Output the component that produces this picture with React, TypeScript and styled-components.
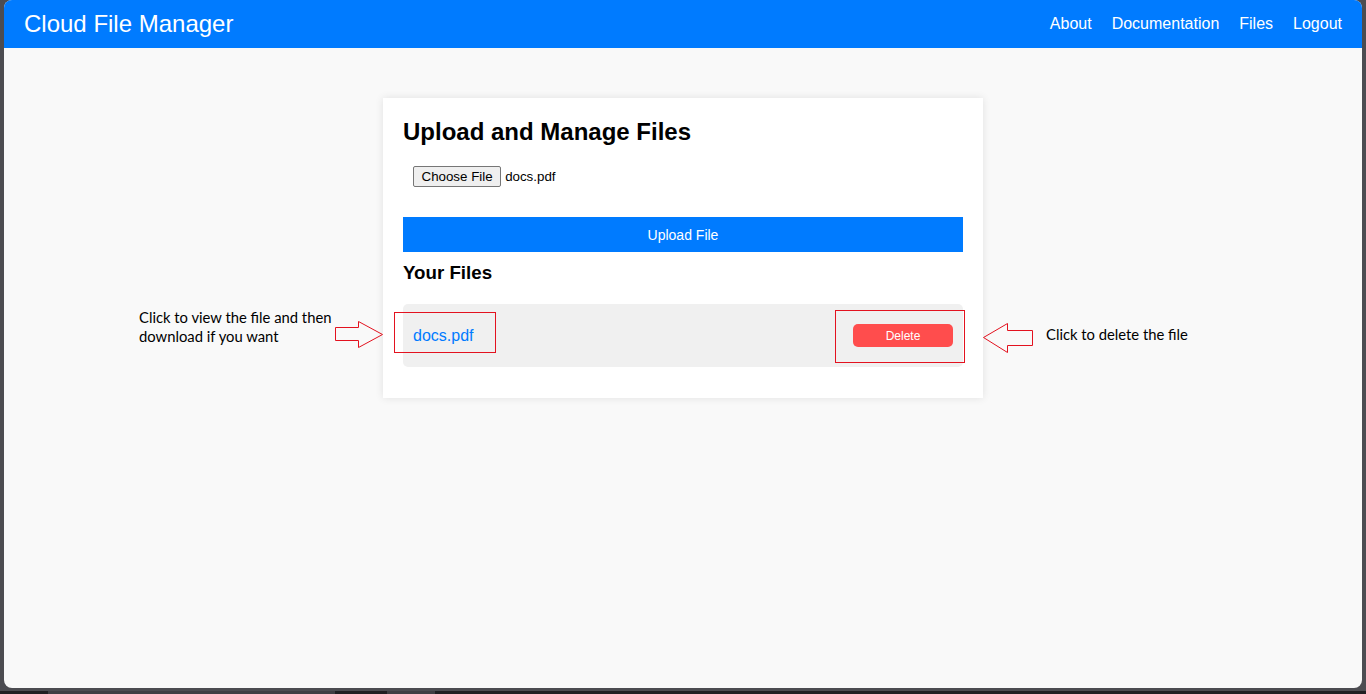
import React from "react";
import styled, { createGlobalStyle } from "styled-components";

const Global = createGlobalStyle`
  html, body { margin: 0; padding: 0; }
  body { background: #4c4c51; font-family: "Liberation Sans", Arial, sans-serif; }
`;

const Screen = styled.div`
  width: 1366px;
  height: 694px;
  display: flex;
  flex-direction: column;
  overflow: hidden;
`;

const Frame = styled.div`
  margin: 0 4px 3px 4px;
  height: 688px;
  border-radius: 8px;
  overflow: hidden;
  background: #f9f9f9;
  display: flex;
  flex-direction: column;
`;

const Taskbar = styled.div`
  height: 3px;
  display: flex;
`;

const TaskSeg = styled.div<{ $w: number; $c: string }>`
  width: ${(p) => p.$w}px;
  flex: ${(p) => (p.$w ? "none" : "1")};
  background: ${(p) => p.$c};
`;

const NavBar = styled.header`
  height: 48px;
  flex: none;
  background: #007bff;
  display: flex;
  align-items: center;
  justify-content: space-between;
  padding: 0 20px;
  color: #fff;
`;

const Brand = styled.div`
  font-size: 24px;
  color: #fff;
`;

const NavLinks = styled.nav`
  display: flex;
  gap: 20px;
`;

const NavLink = styled.a`
  color: #fff;
  text-decoration: none;
  font-size: 16px;
`;

const Main = styled.main`
  flex: 1;
  display: flex;
  justify-content: center;
  padding-top: 50px;
`;

const Card = styled.section`
  position: relative;
  width: 600px;
  height: 300px;
  box-sizing: border-box;
  padding: 20px;
  background: #fff;
  box-shadow: 0 0 8px rgba(0, 0, 0, 0.1);
`;

const Title = styled.h2`
  margin: 0 0 10px;
  font-size: 24px;
  line-height: 28px;
  font-weight: bold;
  color: #000;
`;

const FileField = styled.div`
  padding: 10px;
  margin-bottom: 20px;
  display: flex;
  align-items: center;
  gap: 4px;
  font-size: 13.33px;
  height: 21px;
`;

const ChooseButton = styled.button`
  height: 21px;
  padding: 1px 7.5px;
  border: 1px solid #767676;
  border-radius: 2px;
  background: #efefef;
  font-family: "Liberation Sans", Arial, sans-serif;
  font-size: 13.33px;
  color: #000;
`;

const FileName = styled.span`
  color: #000;
`;

const UploadButton = styled.button`
  display: block;
  width: 100%;
  height: 35px;
  border: none;
  background: #007bff;
  color: #fff;
  font-family: "Liberation Sans", Arial, sans-serif;
  font-size: 14px;
`;

const SubTitle = styled.h3`
  margin: 10px 0 20px;
  font-size: 18.72px;
  line-height: 22px;
  font-weight: bold;
  color: #000;
`;

const FileRow = styled.div`
  position: relative;
  display: flex;
  align-items: center;
  justify-content: space-between;
  height: 23px;
  padding: 20px 10px;
  background: #f0f0f0;
  border-radius: 5px;
`;

const FileLink = styled.a`
  color: #007bff;
  font-size: 16px;
  text-decoration: none;
`;

const DeleteButton = styled.button`
  width: 100px;
  height: 23px;
  border: none;
  border-radius: 5px;
  background: #ff4d4d;
  color: #fff;
  font-family: "Liberation Sans", Arial, sans-serif;
  font-size: 12px;
`;

const RedBox = styled.div<{ $l: number; $t: number; $w: number; $h: number }>`
  position: absolute;
  left: ${(p) => p.$l}px;
  top: ${(p) => p.$t}px;
  width: ${(p) => p.$w}px;
  height: ${(p) => p.$h}px;
  box-sizing: border-box;
  border: 1px solid #e3121f;
  pointer-events: none;
`;

const Note = styled.div<{ $l: number; $t: number }>`
  position: absolute;
  left: ${(p) => p.$l}px;
  top: ${(p) => p.$t}px;
  font-family: Lato, "Open Sans", sans-serif;
  font-size: 14.8px;
  line-height: 19px;
  color: #000;
  white-space: nowrap;
`;

const ArrowSvg = styled.svg<{ $l: number; $t: number }>`
  position: absolute;
  left: ${(p) => p.$l}px;
  top: ${(p) => p.$t}px;
  overflow: visible;
`;

export default function App() {
  return (
    <>
      <Global />
      <Screen>
        <Frame>
          <NavBar>
            <Brand>Cloud File Manager</Brand>
            <NavLinks>
              <NavLink href="#">About</NavLink>
              <NavLink href="#">Documentation</NavLink>
              <NavLink href="#">Files</NavLink>
              <NavLink href="#">Logout</NavLink>
            </NavLinks>
          </NavBar>
          <Main>
            <Card>
              <Title>Upload and Manage Files</Title>
              <FileField>
                <ChooseButton type="button">Choose File</ChooseButton>
                <FileName>docs.pdf</FileName>
              </FileField>
              <UploadButton type="button">Upload File</UploadButton>
              <SubTitle>Your Files</SubTitle>
              <FileRow>
                <FileLink href="#">docs.pdf</FileLink>
                <DeleteButton type="button">Delete</DeleteButton>
                <RedBox $l={-9} $t={8} $w={102} $h={41} />
                <RedBox $l={432} $t={6} $w={130} $h={53} />
              </FileRow>

              <Note $l={-244} $t={210}>
                Click to view the file and then
                <br />
                download if you want
              </Note>
              <ArrowSvg $l={-48} $t={223} width="48" height="27" viewBox="0 0 48 27">
                <polygon
                  points="0.5,6.5 23.5,6.5 23.5,0.5 47.5,13.5 23.5,26.5 23.5,19.5 0.5,19.5"
                  fill="none"
                  stroke="#e3121f"
                  strokeWidth="1"
                />
              </ArrowSvg>
              <ArrowSvg $l={600} $t={225} width="50" height="30" viewBox="0 0 50 30">
                <polygon
                  points="0.5,14.5 24.5,0.5 24.5,7.5 49.5,7.5 49.5,22.5 24.5,22.5 24.5,29.5"
                  fill="none"
                  stroke="#e3121f"
                  strokeWidth="1"
                />
              </ArrowSvg>
              <Note $l={663} $t={227}>Click to delete the file</Note>
            </Card>
          </Main>
        </Frame>
        <Taskbar>
          <TaskSeg $w={48} $c="#1f1f22" />
          <TaskSeg $w={287} $c="#3e3e43" />
          <TaskSeg $w={52} $c="#1f1f22" />
          <TaskSeg $w={48} $c="#3e3e43" />
          <TaskSeg $w={0} $c="#1f1f22" />
        </Taskbar>
      </Screen>
    </>
  );
}
